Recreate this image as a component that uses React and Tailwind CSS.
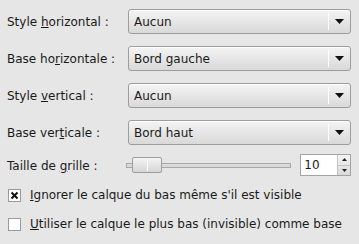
import React from 'react';

const Combo = ({ value }) => (
  <div className="h-[25px] flex items-center rounded-[3px] border border-[#9d9d9d] bg-gradient-to-b from-[#f4f4f4] to-[#d9d9d9] shadow-[inset_0_1px_0_#ffffff]">
    <span className="flex-1 pl-[5px] text-[12px] text-[#1a1a1a]">{value}</span>
    <div className="w-px h-[17px] bg-[#b4b4b4] border-r border-white" />
    <svg className="mx-[6px]" width="9" height="5" viewBox="0 0 9 5">
      <path d="M0 0h9L4.5 5z" fill="#111" />
    </svg>
  </div>
);

const Label = ({ pre, u, post }) => (
  <span className="text-[12px] text-[#1a1a1a] whitespace-nowrap">
    {pre}<span className="underline underline-offset-1">{u}</span>{post}
  </span>
);

const Check = ({ checked }) => (
  <div className="w-[13px] h-[13px] border border-[#9a9a9a] bg-white flex items-center justify-center shrink-0">
    {checked && (
      <svg width="9" height="9" viewBox="0 0 9 9">
        <path d="M1.5 1.5l6 6M7.5 1.5l-6 6" stroke="#111" strokeWidth="2" />
      </svg>
    )}
  </div>
);

const App = () => {
  return (
    <div className="w-[359px] h-[244px] bg-[#e6e6e6] font-['DejaVu_Sans',sans-serif] pl-[7px] pr-[8px] pt-[9px]">
      <div className="grid grid-cols-[121px_1fr] gap-y-[12px] items-center">
        <Label pre="Style " u="h" post="orizontal :" />
        <Combo value="Aucun" />
        <Label pre="Base ho" u="r" post="izontale :" />
        <Combo value="Bord gauche" />
        <Label pre="Style " u="v" post="ertical :" />
        <Combo value="Aucun" />
        <Label pre="Base ver" u="t" post="icale :" />
        <Combo value="Bord haut" />
      </div>

      {/* Taille de grille */}
      <div className="mt-[9px] flex items-center h-[22px]">
        <div className="w-[120px]">
          <Label pre="Taille de " u="g" post="rille :" />
        </div>
        <div className="relative w-[166px] h-[16px] flex items-center">
          <div className="w-full h-[5px] border border-[#a8a8a8] bg-[#dadada]" />
          <div className="absolute left-[6px] top-0 w-[30px] h-[16px] rounded-[2px] border border-[#9d9d9d] bg-gradient-to-b from-[#f4f4f4] to-[#d6d6d6] flex justify-center items-center">
            <div className="w-px h-[11px] bg-[#a0a0a0] border-r border-white" />
          </div>
        </div>
        <div className="ml-[9px] w-[51px] h-[22px] flex border border-[#a3a3a3] bg-white">
          <span className="flex-1 pl-[3px] text-[12px] leading-[20px] text-[#1a1a1a]">10</span>
          <div className="w-[13px] flex flex-col border-l border-[#c4c4c4] bg-gradient-to-b from-[#f4f4f4] to-[#dadada]">
            <div className="flex-1 flex items-center justify-center border-b border-[#c4c4c4]">
              <svg width="5" height="3" viewBox="0 0 5 3"><path d="M0 3h5L2.5 0z" fill="#222" /></svg>
            </div>
            <div className="flex-1 flex items-center justify-center">
              <svg width="5" height="3" viewBox="0 0 5 3"><path d="M0 0h5L2.5 3z" fill="#222" /></svg>
            </div>
          </div>
        </div>
      </div>

      <div className="mt-[11px] flex items-center gap-[9px] pl-[1px] h-[16px]">
        <Check checked />
        <Label pre="" u="I" post="gnorer le calque du bas même s'il est visible" />
      </div>
      <div className="mt-[13px] flex items-center gap-[9px] pl-[1px] h-[16px]">
        <Check />
        <Label pre="" u="U" post="tiliser le calque le plus bas (invisible) comme base" />
      </div>
    </div>
  );
};

export default App;
